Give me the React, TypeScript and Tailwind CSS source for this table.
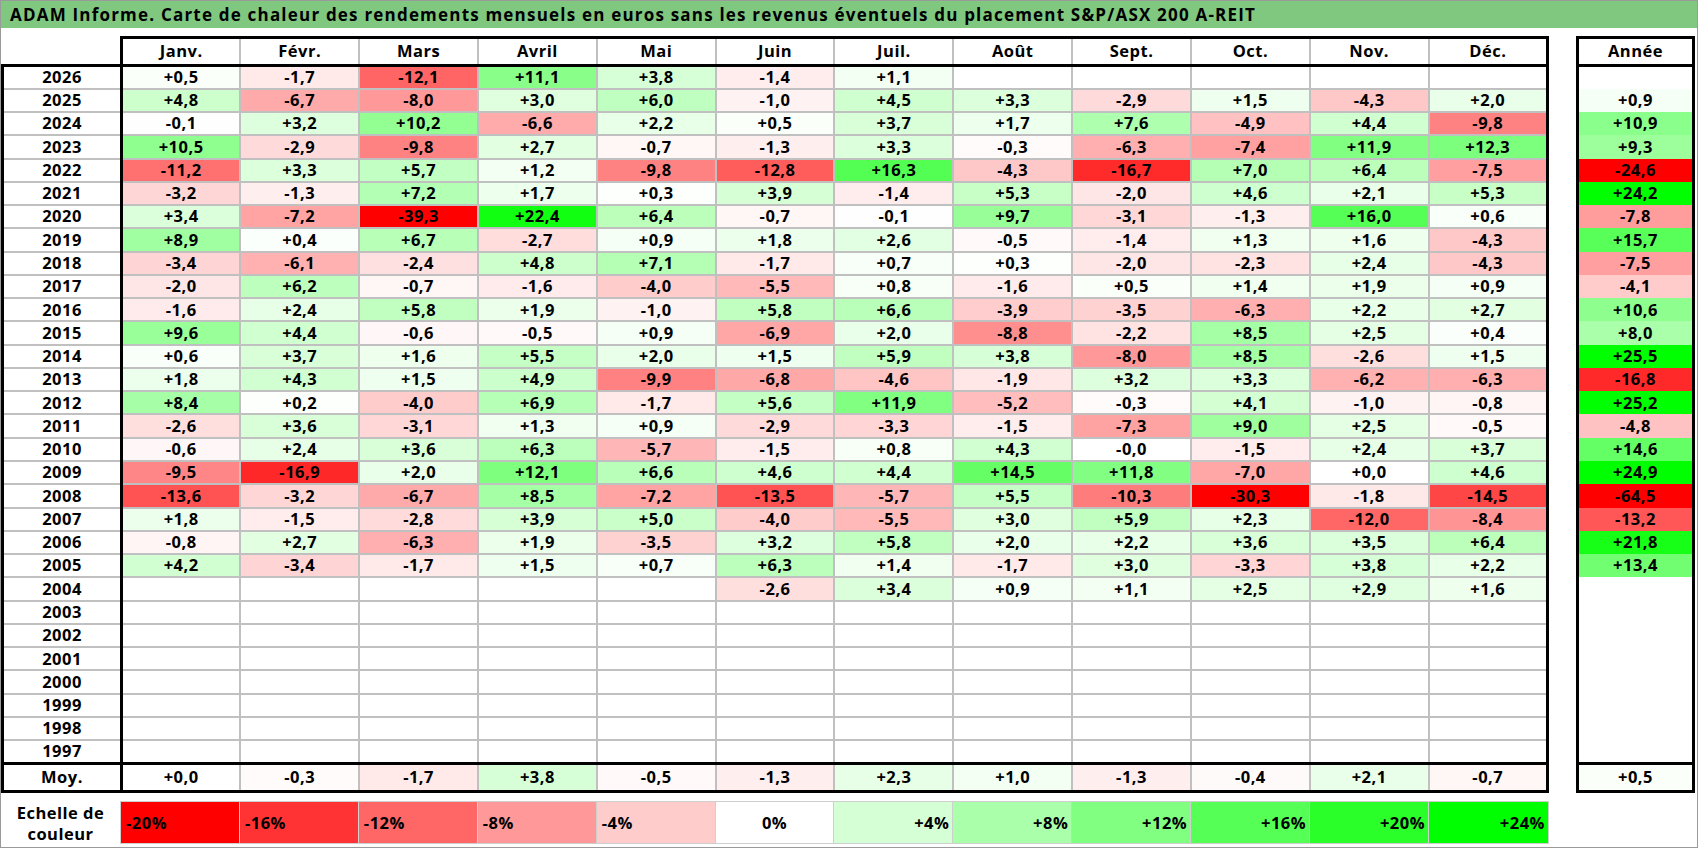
import clsx from 'clsx'

const MONTHS = ['Janv.', 'Févr.', 'Mars', 'Avril', 'Mai', 'Juin', 'Juil.', 'Août', 'Sept.', 'Oct.', 'Nov.', 'Déc.']

// year | 12 monthly returns ('.' = no data) | yearly return
const RAW = `2026|+0,5 -1,7 -12,1 +11,1 +3,8 -1,4 +1,1 . . . . .|.
2025|+4,8 -6,7 -8,0 +3,0 +6,0 -1,0 +4,5 +3,3 -2,9 +1,5 -4,3 +2,0|+0,9
2024|-0,1 +3,2 +10,2 -6,6 +2,2 +0,5 +3,7 +1,7 +7,6 -4,9 +4,4 -9,8|+10,9
2023|+10,5 -2,9 -9,8 +2,7 -0,7 -1,3 +3,3 -0,3 -6,3 -7,4 +11,9 +12,3|+9,3
2022|-11,2 +3,3 +5,7 +1,2 -9,8 -12,8 +16,3 -4,3 -16,7 +7,0 +6,4 -7,5|-24,6
2021|-3,2 -1,3 +7,2 +1,7 +0,3 +3,9 -1,4 +5,3 -2,0 +4,6 +2,1 +5,3|+24,2
2020|+3,4 -7,2 -39,3 +22,4 +6,4 -0,7 -0,1 +9,7 -3,1 -1,3 +16,0 +0,6|-7,8
2019|+8,9 +0,4 +6,7 -2,7 +0,9 +1,8 +2,6 -0,5 -1,4 +1,3 +1,6 -4,3|+15,7
2018|-3,4 -6,1 -2,4 +4,8 +7,1 -1,7 +0,7 +0,3 -2,0 -2,3 +2,4 -4,3|-7,5
2017|-2,0 +6,2 -0,7 -1,6 -4,0 -5,5 +0,8 -1,6 +0,5 +1,4 +1,9 +0,9|-4,1
2016|-1,6 +2,4 +5,8 +1,9 -1,0 +5,8 +6,6 -3,9 -3,5 -6,3 +2,2 +2,7|+10,6
2015|+9,6 +4,4 -0,6 -0,5 +0,9 -6,9 +2,0 -8,8 -2,2 +8,5 +2,5 +0,4|+8,0
2014|+0,6 +3,7 +1,6 +5,5 +2,0 +1,5 +5,9 +3,8 -8,0 +8,5 -2,6 +1,5|+25,5
2013|+1,8 +4,3 +1,5 +4,9 -9,9 -6,8 -4,6 -1,9 +3,2 +3,3 -6,2 -6,3|-16,8
2012|+8,4 +0,2 -4,0 +6,9 -1,7 +5,6 +11,9 -5,2 -0,3 +4,1 -1,0 -0,8|+25,2
2011|-2,6 +3,6 -3,1 +1,3 +0,9 -2,9 -3,3 -1,5 -7,3 +9,0 +2,5 -0,5|-4,8
2010|-0,6 +2,4 +3,6 +6,3 -5,7 -1,5 +0,8 +4,3 -0,0 -1,5 +2,4 +3,7|+14,6
2009|-9,5 -16,9 +2,0 +12,1 +6,6 +4,6 +4,4 +14,5 +11,8 -7,0 +0,0 +4,6|+24,9
2008|-13,6 -3,2 -6,7 +8,5 -7,2 -13,5 -5,7 +5,5 -10,3 -30,3 -1,8 -14,5|-64,5
2007|+1,8 -1,5 -2,8 +3,9 +5,0 -4,0 -5,5 +3,0 +5,9 +2,3 -12,0 -8,4|-13,2
2006|-0,8 +2,7 -6,3 +1,9 -3,5 +3,2 +5,8 +2,0 +2,2 +3,6 +3,5 +6,4|+21,8
2005|+4,2 -3,4 -1,7 +1,5 +0,7 +6,3 +1,4 -1,7 +3,0 -3,3 +3,8 +2,2|+13,4
2004|. . . . . -2,6 +3,4 +0,9 +1,1 +2,5 +2,9 +1,6|.
2003|. . . . . . . . . . . .|.
2002|. . . . . . . . . . . .|.
2001|. . . . . . . . . . . .|.
2000|. . . . . . . . . . . .|.
1999|. . . . . . . . . . . .|.
1998|. . . . . . . . . . . .|.
1997|. . . . . . . . . . . .|.`

const ROWS = RAW.split('\n').map(line => {
  const [year, months, total] = line.split('|')
  return {
    year,
    months: months.split(' ').map(v => (v === '.' ? '' : v)),
    total: total === '.' ? '' : total,
  }
})

const AVG = ['+0,0', '-0,3', '-1,7', '+3,8', '-0,5', '-1,3', '+2,3', '+1,0', '-1,3', '-0,4', '+2,1', '-0,7']
const AVG_TOTAL = '+0,5'
const SCALE = [-20, -16, -12, -8, -4, 0, 4, 8, 12, 16, 20, 24]

// red saturates at -20, green at +24
function heat(v: string | number) {
  if (v === '') return '#ffffff'
  const n = typeof v === 'number' ? v : parseFloat(v.replace(',', '.'))
  if (n < 0) {
    const c = Math.round(255 * (1 - Math.min(-n / 20, 1)))
    return `rgb(255,${c},${c})`
  }
  const c = Math.round(255 * (1 - Math.min(n / 24, 1)))
  return `rgb(${c},255,${c})`
}

const grid = 'border-2 border-[#c0c0c0]'
const thick = 'border-black'

export default function App() {
  return (
    <div className="w-[1698px] h-[848px] bg-white border border-[#9a9a9a] overflow-hidden font-['Open_Sans',sans-serif] font-bold text-black text-[16.5px] tracking-[0.5px] leading-none">
      <div className="h-[27px] bg-[#80c880] pl-[9px] flex items-center text-[17px] tracking-[1.2px] whitespace-nowrap">
        ADAM Informe. Carte de chaleur des rendements mensuels en euros sans les revenus éventuels du placement S&amp;P/ASX 200 A-REIT
      </div>

      <div className="mt-[8px] flex gap-[27px]">
        <div>
          <table className="border-collapse table-fixed w-[1548px]">
            <colgroup>
              <col className="w-[119px]" />
              {MONTHS.map(m => <col key={m} />)}
            </colgroup>
            <thead>
              <tr className="h-[28px]">
                <th className="border-b-[3px] border-black" />
                {MONTHS.map((m, i) => (
                  <th
                    key={m}
                    className={clsx(
                      grid,
                      'border-y-[3px] border-y-black',
                      i === 0 && 'border-l-[3px] border-l-black',
                      i === 11 && 'border-r-[3px] border-r-black',
                    )}
                  >
                    {m}
                  </th>
                ))}
              </tr>
            </thead>
            <tbody>
              {ROWS.map(r => (
                <tr key={r.year} className="h-[23.28px]">
                  <td className={clsx(grid, 'text-center border-x-[3px] border-x-black')}>{r.year}</td>
                  {r.months.map((v, i) => (
                    <td
                      key={i}
                      className={clsx(grid, 'text-center p-0', i === 11 && 'border-r-[3px] border-r-black')}
                      style={{ backgroundColor: heat(v) }}
                    >
                      {v}
                    </td>
                  ))}
                </tr>
              ))}
              <tr className="h-[28.5px]">
                <td className={clsx('border-[3px]', thick, 'text-center')}>Moy.</td>
                {AVG.map((v, i) => (
                  <td
                    key={i}
                    className={clsx(grid, 'text-center border-y-[3px] border-y-black', i === 11 && 'border-r-[3px] border-r-black')}
                    style={{ backgroundColor: heat(v) }}
                  >
                    {v}
                  </td>
                ))}
              </tr>
            </tbody>
          </table>

          <div className="mt-[8px] flex h-[43px]">
            <div className="w-[119px] flex flex-col items-center justify-center leading-[21px] text-center">
              <span>Echelle de</span>
              <span>couleur</span>
            </div>
            <div className="flex-1 grid grid-cols-12 border border-[#cfcfcf]">
              {SCALE.map(s => (
                <div
                  key={s}
                  className={clsx(
                    'flex items-center border-r border-[#cfcfcf] last:border-r-0',
                    s < 0 && 'justify-start pl-[5px]',
                    s === 0 && 'justify-center',
                    s > 0 && 'justify-end pr-[3px]',
                  )}
                  style={{ backgroundColor: heat(s) }}
                >
                  {s > 0 ? `+${s}%` : `${s}%`}
                </div>
              ))}
            </div>
          </div>
        </div>

        <table className="border-collapse table-fixed w-[119px] self-start">
          <thead>
            <tr className="h-[28px]">
              <th className="border-[3px] border-black">Année</th>
            </tr>
          </thead>
          <tbody>
            {ROWS.map(r => (
              <tr key={r.year} className="h-[23.28px]">
                <td className="border-x-[3px] border-black text-center p-0" style={{ backgroundColor: heat(r.total) }}>
                  {r.total}
                </td>
              </tr>
            ))}
            <tr className="h-[28.5px]">
              <td className="border-[3px] border-black text-center" style={{ backgroundColor: heat(AVG_TOTAL) }}>
                {AVG_TOTAL}
              </td>
            </tr>
          </tbody>
        </table>
      </div>
    </div>
  )
}
